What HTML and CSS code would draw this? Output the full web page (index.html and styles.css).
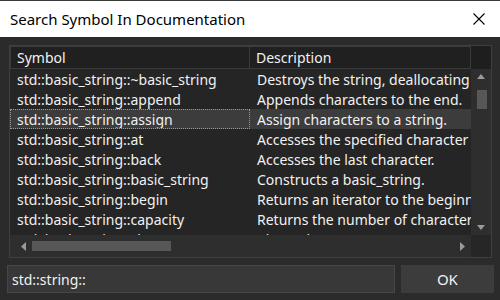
FILE: index.html
```html
<!DOCTYPE html>
<html lang="en">
<head>
  <meta charset="UTF-8" />
  <title>Search Symbol In Documentation</title>
  <link rel="stylesheet" href="styles.css">
</head>
<body>
  <div class="dialog">
    <div class="titlebar">
      <span class="title">Search Symbol In Documentation</span>
      <svg class="close" width="12" height="12" viewBox="0 0 12 12">
        <path d="M0.5 0.5 L11.5 11.5 M11.5 0.5 L0.5 11.5" stroke="#000" stroke-width="1.1" fill="none"/>
      </svg>
    </div>

    <div class="content">
      <div class="listbox">
        <div class="header">
          <div class="hcell col-symbol">Symbol</div>
          <div class="hcell col-desc">Description</div>
          <div class="hfill"></div>
        </div>

        <div class="list-body">
          <div class="rows">
            <div class="row"><div class="cell col-symbol">std::basic_string::~basic_string</div><div class="cell col-desc">Destroys the string, deallocating internal storage if used.</div></div>
            <div class="row"><div class="cell col-symbol">std::basic_string::append</div><div class="cell col-desc">Appends characters to the end.</div></div>
            <div class="row selected"><div class="cell col-symbol focus">std::basic_string::assign</div><div class="cell col-desc">Assign characters to a string.</div></div>
            <div class="row"><div class="cell col-symbol">std::basic_string::at</div><div class="cell col-desc">Accesses the specified character with bounds checking.</div></div>
            <div class="row"><div class="cell col-symbol">std::basic_string::back</div><div class="cell col-desc">Accesses the last character.</div></div>
            <div class="row"><div class="cell col-symbol">std::basic_string::basic_string</div><div class="cell col-desc">Constructs a basic_string.</div></div>
            <div class="row"><div class="cell col-symbol">std::basic_string::begin</div><div class="cell col-desc">Returns an iterator to the beginning.</div></div>
            <div class="row"><div class="cell col-symbol">std::basic_string::capacity</div><div class="cell col-desc">Returns the number of characters that can be held.</div></div>
            <div class="row"><div class="cell col-symbol">std::basic_string::clear</div><div class="cell col-desc">Clears the contents.</div></div>
          </div>

          <div class="vscroll">
            <svg class="arrow" width="20" height="16" viewBox="0 0 20 16"><polygon points="6,10 10,5 14,10" fill="#9a9a9a"/></svg>
            <div class="vtrack"><div class="vthumb"></div></div>
            <svg class="arrow" width="20" height="16" viewBox="0 0 20 16"><polygon points="6,6 14,6 10,11" fill="#9a9a9a"/></svg>
          </div>
        </div>

        <div class="hscroll-row">
          <div class="hscroll">
            <svg class="arrow" width="16" height="21" viewBox="0 0 16 21"><polygon points="11,6 11,15 6,10.5" fill="#9a9a9a"/></svg>
            <div class="htrack"><div class="hthumb"></div></div>
            <svg class="arrow" width="16" height="21" viewBox="0 0 16 21"><polygon points="5,6 5,15 10,10.5" fill="#9a9a9a"/></svg>
          </div>
          <div class="corner"></div>
        </div>
      </div>

      <div class="bottom">
        <div class="search-input">std::string::</div>
        <button class="ok-btn">OK</button>
      </div>
    </div>
  </div>
</body>
</html>
```

FILE: styles.css
```css
body {
  margin: 0;
  width: 500px;
  height: 300px;
  overflow: hidden;
  background: #2b2b2b;
  font-family: "Noto Sans", "Open Sans", sans-serif;
}

.dialog {
  width: 500px;
  height: 300px;
  display: flex;
  flex-direction: column;
}

.titlebar {
  height: 36px;
  border-top: 1px solid #3a3a3a;
  background: #ffffff;
  display: flex;
  align-items: center;
  justify-content: space-between;
  padding: 0 15px 0 10px;
  flex-shrink: 0;
}

.title {
  font-size: 15px;
  color: #000;
}

.close {
  display: block;
}

.content {
  padding: 8px 6px 0 7px;
}

.listbox {
  margin-left: 2px;
  width: 481px;
  height: 211px;
  border: 1px solid #3f3f3f;
  background: #252525;
  display: flex;
  flex-direction: column;
  color: #f1f1f1;
  font-size: 14px;
}

.header {
  display: flex;
  height: 23px;
  flex-shrink: 0;
  background: #202020;
}

.hcell {
  box-sizing: border-box;
  border: 1px solid #3b3b3b;
  padding-left: 6px;
  line-height: 22px;
  white-space: nowrap;
  overflow: hidden;
}

.col-symbol {
  width: 240px;
  flex-shrink: 0;
}

.col-desc {
  width: 221px;
  flex-shrink: 0;
}

.hcell.col-desc {
  border-left: none;
}

.hfill {
  flex: 1;
  background: #1e1e1e;
}

.list-body {
  flex: 1;
  display: flex;
  overflow: hidden;
}

.rows {
  flex: 1;
  overflow: hidden;
}

.row {
  display: flex;
  height: 20px;
}

.cell {
  box-sizing: border-box;
  height: 20px;
  padding-left: 7px;
  line-height: 22px;
  white-space: nowrap;
  overflow: hidden;
}

.row.selected {
  background: #3c3c3c;
}

.cell.focus {
  border: 1px dotted #9a9a9a;
  padding-left: 6px;
  line-height: 20px;
}

.vscroll {
  width: 20px;
  background: #2e2e2e;
  display: flex;
  flex-direction: column;
}

.arrow {
  display: block;
  flex-shrink: 0;
}

.vtrack {
  flex: 1;
  padding-top: 5px;
}

.vthumb {
  width: 10px;
  height: 19px;
  margin-left: 6px;
  background: #575757;
}

.hscroll-row {
  display: flex;
  height: 22px;
  flex-shrink: 0;
}

.hscroll {
  flex: 1;
  background: #2e2e2e;
  display: flex;
  align-items: center;
  padding-left: 5px;
}

.htrack {
  flex: 1;
  display: flex;
  align-items: center;
}

.hthumb {
  width: 139px;
  height: 10px;
  margin-left: 1px;
  background: #575757;
}

.corner {
  width: 20px;
  background: #262626;
}

.bottom {
  display: flex;
  gap: 6px;
  margin-top: 7px;
}

.search-input {
  width: 385px;
  height: 26px;
  border: 1px solid #474747;
  background: #383838;
  color: #f1f1f1;
  font-size: 14px;
  line-height: 27px;
  padding-left: 4px;
}

.ok-btn {
  width: 94px;
  height: 28px;
  border: none;
  background: #3c3c3c;
  color: #f1f1f1;
  font-family: inherit;
  font-size: 15px;
  padding: 0;
}
```
